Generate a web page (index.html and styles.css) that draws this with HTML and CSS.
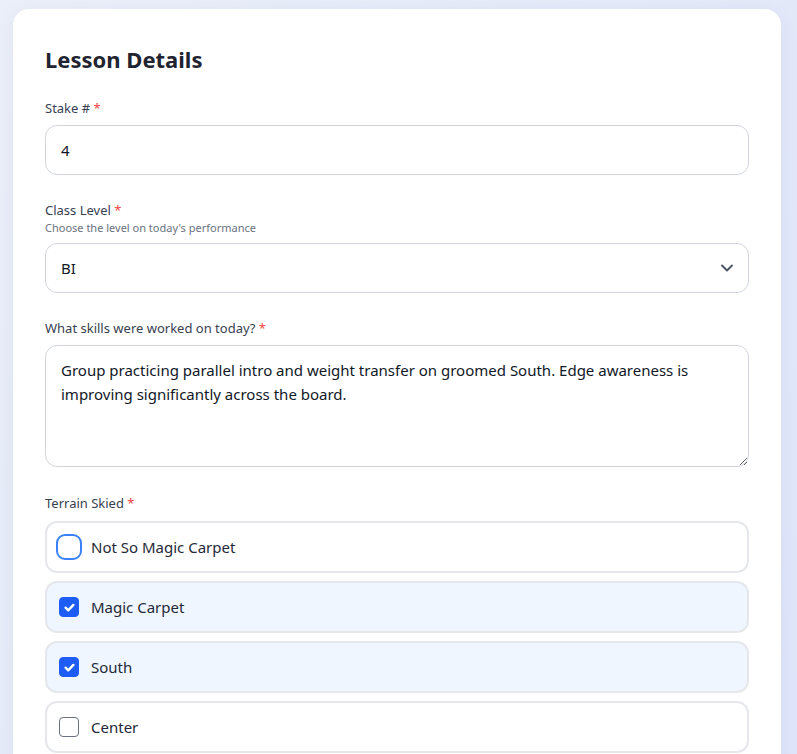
FILE: index.html
```html
<!DOCTYPE html>
<html lang="en">
<head>
<meta charset="utf-8">
<title>Lesson Details</title>
<link rel="stylesheet" href="styles.css">
</head>
<body>
<div class="card">
  <h2 class="title">Lesson Details</h2>

  <div class="field">
    <label class="label" for="stake">Stake # <span class="req">*</span></label>
    <input id="stake" class="input" type="text" value="4">
  </div>

  <div class="field">
    <label class="label with-hint" for="level">Class Level <span class="req">*</span></label>
    <div class="hint">Choose the level on today's performance</div>
    <div class="select-wrap">
      <select id="level" class="input select">
        <option>BI</option>
      </select>
      <svg class="chev" width="16" height="16" viewBox="0 0 16 16" fill="none" stroke="#4b5563" stroke-width="1.9" stroke-linecap="round" stroke-linejoin="round"><path d="M3 5.5l5 5 5-5"/></svg>
    </div>
  </div>

  <div class="field field-text">
    <label class="label" for="skills">What skills were worked on today? <span class="req">*</span></label>
    <textarea id="skills" class="input textarea" rows="4">Group practicing parallel intro and weight transfer on groomed South. Edge awareness is improving significantly across the board.</textarea>
  </div>

  <div class="field terrain">
    <div class="label">Terrain Skied <span class="req">*</span></div>
    <div class="options">
      <label class="opt"><span class="cb focus"></span><span class="opt-text">Not So Magic Carpet</span></label>
      <label class="opt checked"><span class="cb on"><svg width="13" height="13" viewBox="0 0 12 12" fill="none" stroke="#fff" stroke-width="2.2" stroke-linecap="round" stroke-linejoin="round"><path d="M2.4 6.2l2.4 2.4 4.8-5"/></svg></span><span class="opt-text">Magic Carpet</span></label>
      <label class="opt checked"><span class="cb on"><svg width="13" height="13" viewBox="0 0 12 12" fill="none" stroke="#fff" stroke-width="2.2" stroke-linecap="round" stroke-linejoin="round"><path d="M2.4 6.2l2.4 2.4 4.8-5"/></svg></span><span class="opt-text">South</span></label>
      <label class="opt"><span class="cb"></span><span class="opt-text">Center</span></label>
    </div>
  </div>
</div>
</body>
</html>
```

FILE: styles.css
```css
html, body {
  height: 100%;
}
body {
  margin: 0;
  padding: 9px 16px 0 13px;
  background: linear-gradient(120deg, #ebeff9 0%, #e3e9f9 60%, #dfe6fb 100%);
  font-family: "Noto Sans", "Liberation Sans", sans-serif;
  color: #111827;
  box-sizing: border-box;
  overflow: hidden;
}
.card {
  width: 768px;
  box-sizing: border-box;
  background: #fff;
  border-radius: 16px;
  padding: 32px 32px 40px;
  box-shadow: 0 4px 20px rgba(30, 50, 110, 0.06);
}
.title {
  margin: 2px 0 22px;
  font-size: 22px;
  line-height: 32px;
  font-weight: 700;
  color: #1f2430;
}
.field {
  margin-bottom: 24px;
}
.field-text {
  margin-bottom: 25px;
}
.label {
  display: block;
  font-size: 13px;
  line-height: 20px;
  padding-top: 1px;
  color: #374151;
  margin-bottom: 7px;
}
.label.with-hint {
  margin-bottom: 0;
}
.hint {
  font-size: 11px;
  line-height: 16px;
  color: #6b7280;
  margin-bottom: 7px;
}
.req {
  color: #ef4444;
}
.input {
  display: block;
  width: 100%;
  box-sizing: border-box;
  height: 50px;
  border: 1px solid #d1d5db;
  border-radius: 12px;
  padding: 0 15px;
  font-family: inherit;
  font-size: 15px;
  color: #111827;
  background: #fff;
  outline: none;
}
.select-wrap {
  position: relative;
}
.select {
  appearance: none;
  -webkit-appearance: none;
}
.chev {
  position: absolute;
  right: 14px;
  top: 17px;
  pointer-events: none;
}
.textarea {
  height: 122px;
  padding: 12px 15px;
  line-height: 24px;
  resize: vertical;
}
.terrain .label {
  margin-bottom: 8px;
}
.options {
  display: flex;
  flex-direction: column;
  gap: 8px;
}
.opt {
  display: flex;
  align-items: center;
  gap: 12px;
  height: 52px;
  box-sizing: border-box;
  padding: 0 12px;
  border: 2px solid #e5e7eb;
  border-radius: 12px;
  background: #fff;
}
.opt.checked {
  background: #eff6ff;
}
.opt-text {
  font-size: 15px;
  color: #1f2937;
}
.cb {
  width: 20px;
  height: 20px;
  box-sizing: border-box;
  border: 1.5px solid #6b7280;
  border-radius: 4px;
  display: flex;
  align-items: center;
  justify-content: center;
  flex: none;
  background: #fff;
}
.cb.on {
  background: #1d5cf5;
  border-color: #1d5cf5;
}
.cb.focus {
  border-color: transparent;
  outline: 2.5px solid #3b82f6;
  outline-offset: 1px;
  border-radius: 6px;
}
```
